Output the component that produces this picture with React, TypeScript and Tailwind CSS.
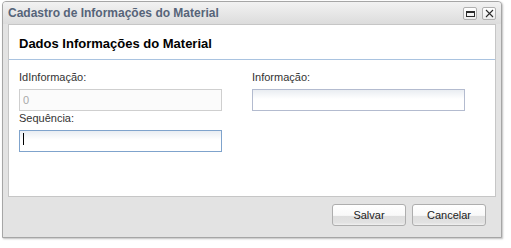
import React from 'react';

const Field = ({ label, width, value, disabled, focused }: { label: string; width: string; value?: string; disabled?: boolean; focused?: boolean }) => (
  <div className="flex flex-col">
    <label className="h-[14px] leading-[14px] text-[11px] text-[#333]">{label}</label>
    <div className={`relative mt-[3px] h-[22px] ${width}`}>
      <input
        readOnly
        value={value ?? ''}
        disabled={disabled}
        className={
          disabled
            ? 'w-full h-full border border-[#cfcfcf] bg-[#fbfbfb] px-[3px] text-[11px] text-[#a9a9a9] outline-none'
            : focused
            ? 'w-full h-full border border-[#7fa3cc] bg-[linear-gradient(#e9edf2,#ffffff_45%)] px-[3px] text-[11px] text-[#222] outline-none'
            : 'w-full h-full border border-[#b3bbcf] bg-[linear-gradient(#e9edf2,#ffffff_45%)] px-[3px] text-[11px] text-[#222] outline-none'
        }
      />
      {/* cursor do campo em foco */}
      {focused && <span className="absolute left-[4px] top-[5px] w-px h-[12px] bg-black" />}
    </div>
  </div>
);

const Button = ({ children }: { children: React.ReactNode }) => (
  <button className="w-[74px] h-[22px] rounded-[3px] border border-[#aeaeae] bg-[linear-gradient(#ffffff_0%,#f9f9f9_52%,#dedede_56%,#e2e2e2_88%,#f0f0f0_100%)] text-[11px] text-[#222] leading-none">
    {children}
  </button>
);

export default function App() {
  return (
    <div className="w-[511px] h-[248px] bg-white pt-[1px] pl-[2px] font-['Liberation_Sans',Arial,sans-serif]">
      <div className="w-[500px] h-[237px] flex flex-col border border-[#a6a6a6] rounded-t-[4px] bg-[#e3e3e3] shadow-[1px_1px_2px_rgba(0,0,0,0.25)]">
        {/* Barra de título */}
        <div className="h-[22px] flex items-center justify-between pl-[5px] pr-[5px] rounded-t-[3px] bg-[linear-gradient(#f2f2f2,#dcdcdc)]">
          <span className="text-[12px] font-bold text-[#566479]">Cadastro de Informações do Material</span>
          <div className="flex gap-[5px] mt-[1px]">
            <div className="w-[14px] h-[13px] rounded-[2px] border border-[#b0b0b0] bg-[linear-gradient(#ffffff,#ececec)] flex items-center justify-center">
              <div className="w-[9px] h-[6px] border border-t-2 border-[#2a2a2a]" />
            </div>
            <div className="w-[14px] h-[13px] rounded-[2px] border border-[#b0b0b0] bg-[linear-gradient(#ffffff,#ececec)] flex items-center justify-center">
              <svg width="9" height="9" viewBox="0 0 9 9">
                <path d="M1 1L8 8M8 1L1 8" stroke="#2a2a2a" strokeWidth="1.1" />
              </svg>
            </div>
          </div>
        </div>

        {/* Painel */}
        <div className="mx-[5px] h-[173px] border border-[#c6c6c6] bg-white">
          <div className="pl-[10px] pt-[11px] pb-[8px] border-b border-[#a9c3e0]">
            <h2 className="text-[13px] leading-[15px] font-bold text-black">Dados Informações do Material</h2>
          </div>
          <div className="pl-[10px] pt-[10px] grid grid-cols-[233px_1fr]">
            <div className="flex flex-col gap-[2px]">
              <Field label="IdInformação:" width="w-[203px]" value="0" disabled />
              <Field label="Sequência:" width="w-[203px]" focused />
            </div>
            <div>
              <Field label="Informação:" width="w-[213px]" />
            </div>
          </div>
        </div>

        {/* Rodapé */}
        <div className="flex-1 flex justify-end items-start gap-[6px] pt-[7px] pr-[15px]">
          <Button>Salvar</Button>
          <Button>Cancelar</Button>
        </div>
      </div>
    </div>
  );
}
